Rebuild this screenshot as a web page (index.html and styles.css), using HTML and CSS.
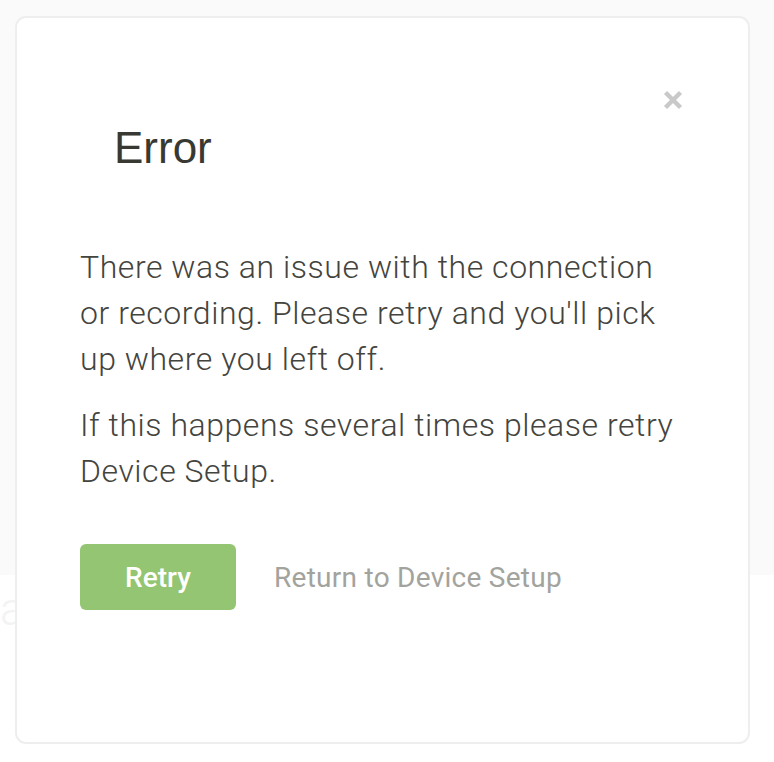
FILE: index.html
```html
<!DOCTYPE html>
<html lang="en">
<head>
<meta charset="utf-8">
<title>Error</title>
<link rel="stylesheet" href="styles.css">
</head>
<body>
<div class="page">
  <div class="page-top"></div>
  <div class="page-bottom"><span class="ghost">a</span></div>
</div>
<div class="modal" role="dialog" aria-labelledby="modal-title">
  <div class="modal-head">
    <h1 id="modal-title" class="modal-title">Error</h1>
    <button class="close" aria-label="Close">
      <svg width="20" height="20" viewBox="0 0 20 20"><path d="M2.5 2.5 L17.5 17.5 M17.5 2.5 L2.5 17.5" stroke="#c9c9c9" stroke-width="4.4" stroke-linecap="butt"/></svg>
    </button>
  </div>
  <div class="modal-body">
    <p>There was an issue with the connection or recording. Please retry and you'll pick up where you left off.</p>
    <p>If this happens several times please retry Device Setup.</p>
  </div>
  <div class="modal-actions">
    <button class="btn-primary">Retry</button>
    <a class="link" href="#">Return to Device Setup</a>
  </div>
</div>
</body>
</html>
```

FILE: styles.css
```css
html, body {
  margin: 0;
  padding: 0;
  background: #ffffff;
}
body {
  width: 774px;
  height: 762px;
  overflow: hidden;
  position: relative;
  font-family: Roboto, "Liberation Sans", sans-serif;
}
.page {
  display: flex;
  flex-direction: column;
  height: 762px;
}
.page-top {
  height: 575px;
  background: #fafafa;
}
.page-bottom {
  flex: 1;
  background: #ffffff;
  overflow: hidden;
}
.ghost {
  display: block;
  margin-left: 0;
  margin-top: 4px;
  font-size: 46px;
  font-weight: 300;
  color: #f3f3f3;
  line-height: 60px;
}
.modal {
  position: absolute;
  left: 15px;
  top: 16px;
  width: 731px;
  height: 724px;
  background: #ffffff;
  border: 2px solid #eeeeee;
  border-radius: 11px;
  box-sizing: content-box;
  display: flex;
  flex-direction: column;
  padding: 0;
}
.modal-head {
  display: flex;
  justify-content: space-between;
  align-items: flex-start;
  padding: 72px 65px 0 97px;
}
.modal-title {
  margin: 28px 0 0 0;
  font-family: "Liberation Sans", Arial, sans-serif;
  font-weight: 400;
  font-size: 44px;
  line-height: 60px;
  color: #393933;
}
.close {
  background: none;
  border: 0;
  padding: 0;
  width: 20px;
  height: 20px;
  cursor: pointer;
  display: block;
}
.close svg { display: block; }
.modal-body {
  padding: 66px 60px 0 63px;
}
.modal-body p {
  margin: 0 0 20px 0;
  font-family: Roboto, sans-serif;
  font-weight: 300;
  font-size: 32px;
  line-height: 46px;
  letter-spacing: 0.55px;
  color: #44443e;
}
.modal-actions {
  display: flex;
  align-items: center;
  gap: 38px;
  padding: 30px 0 0 63px;
}
.btn-primary {
  width: 156px;
  height: 66px;
  border: 0;
  border-radius: 6px;
  background: #93c572;
  color: #ffffff;
  font-family: Roboto, sans-serif;
  font-weight: 500;
  font-size: 28px;
  padding: 0;
  cursor: pointer;
}
.link {
  font-family: Roboto, sans-serif;
  font-weight: 400;
  font-size: 28px;
  letter-spacing: 0.27px;
  color: #a3a39e;
  text-decoration: none;
}
```
